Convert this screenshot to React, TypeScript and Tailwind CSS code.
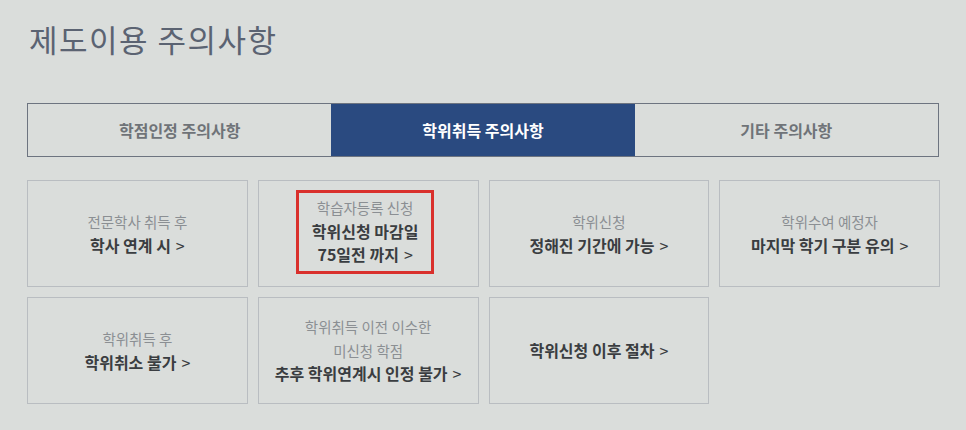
import React from "react";

interface Card {
  sub?: string[];
  main: string[];
  highlight?: boolean;
}

const tabs = ["학점인정 주의사항", "학위취득 주의사항", "기타 주의사항"];

const cards: Card[] = [
  { sub: ["전문학사 취득 후"], main: ["학사 연계 시"] },
  { sub: ["학습자등록 신청"], main: ["학위신청 마감일", "75일전 까지"], highlight: true },
  { sub: ["학위신청"], main: ["정해진 기간에 가능"] },
  { sub: ["학위수여 예정자"], main: ["마지막 학기 구분 유의"] },
  { sub: ["학위취득 후"], main: ["학위취소 불가"] },
  { sub: ["학위취득 이전 이수한", "미신청 학점"], main: ["추후 학위연계시 인정 불가"] },
  { main: ["학위신청 이후 절차"] },
];

function CardText({ card }: { card: Card }) {
  return (
    <div className="flex flex-col items-center text-center leading-[23.5px] whitespace-nowrap">
      {card.sub?.map((s) => (
        <div key={s} className="text-[14.5px] text-[#8b8f93]">
          {s}
        </div>
      ))}
      {card.main.map((m, i) => (
        <div key={m} className="text-[16px] font-bold text-[#3a3d41]">
          {m}
          {i === card.main.length - 1 && <span className="ml-[5px] font-normal">&gt;</span>}
        </div>
      ))}
    </div>
  );
}

export default function App() {
  return (
    <div
      className="w-[966px] h-[430px] bg-[#dadddb] px-[27px] pt-[18px] overflow-hidden"
      style={{ fontFamily: '"Noto Sans CJK KR", "Noto Sans", sans-serif' }}
    >
      <h1 className="text-[31px] leading-[42px] tracking-[1.5px] text-[#5b6372] pl-[2px]">제도이용 주의사항</h1>

      <div className="mt-[43px] grid grid-cols-3 border border-[#6d7480] w-[912px] h-[54px]">
        {tabs.map((t, i) => (
          <div
            key={t}
            className={
              i === 1
                ? "flex items-center justify-center bg-[#2a4a80] text-white text-[16px] font-bold"
                : "flex items-center justify-center text-[#6f7378] text-[16px] font-bold"
            }
          >
            {t}
          </div>
        ))}
      </div>

      <div className="mt-[23px] grid grid-cols-4 gap-[10px] w-[913px]">
        {cards.map((c, i) => (
          <div
            key={i}
            className="h-[107px] border border-[#b9bdc1] flex items-center justify-center"
          >
            {c.highlight ? (
              <div className="border-[3px] border-[#d9302c] w-[138px] h-[84px] -ml-[6px] -mt-[4px] flex items-center justify-center">
                <CardText card={c} />
              </div>
            ) : (
              <CardText card={c} />
            )}
          </div>
        ))}
      </div>
    </div>
  );
}
